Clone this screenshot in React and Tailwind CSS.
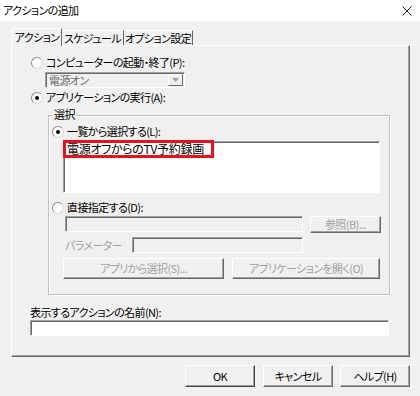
import React from "react";

const FONT = { fontFamily: '"Noto Sans CJK JP", "Noto Sans", sans-serif', fontFeatureSettings: '"palt"' };

function Radio({ checked, label, className = "" }) {
  return (
    <div className={"flex items-center h-[13px] " + className}>
      <span className="w-[12px] h-[12px] rounded-full border border-t-[#8d8d8d] border-l-[#8d8d8d] border-r-[#d8d8d8] border-b-[#d8d8d8] bg-white flex items-center justify-center shrink-0">
        {checked && <span className="w-[4px] h-[4px] rounded-full bg-black" />}
      </span>
      <span className="ml-[3px] leading-none whitespace-nowrap">{label}</span>
    </div>
  );
}

function Btn({ children, w, h, disabled, def, className = "" }) {
  return (
    <div
      className={
        "flex items-center justify-center leading-none whitespace-nowrap border border-t-white border-l-white " +
        (def ? "border-r-[#404040] border-b-[#404040] " : "border-r-[#696969] border-b-[#696969] ") +
        "shadow-[inset_-1px_-1px_0_#a0a0a0] bg-[#f0f0f0] " +
        (disabled ? "text-[#a0a0a0] " : "text-black ") +
        className
      }
      style={{ width: w, height: h }}
    >
      {children}
    </div>
  );
}

function Sunken({ w, h, white, className = "", children }) {
  return (
    <div
      className={
        "border border-t-[#a0a0a0] border-l-[#a0a0a0] border-r-white border-b-white shadow-[inset_1px_1px_0_#696969] " +
        (white ? "bg-white " : "bg-[#f0f0f0] ") +
        className
      }
      style={{ width: w, height: h }}
    >
      {children}
    </div>
  );
}

export default function App() {
  return (
    <div className="w-[420px] h-[396px] bg-[#f0f0f0] text-[11px] tracking-[-0.6px] text-black overflow-hidden flex flex-col" style={FONT}>
      {/* Title bar */}
      <div className="h-[21px] bg-white flex items-center justify-between pl-[3px] pr-[8px] shrink-0">
        <span className="leading-none">アクションの追加</span>
        <svg width="10" height="10" viewBox="0 0 10 10" className="mt-[1px]">
          <path d="M0.5 0.5 L9.5 9.5 M9.5 0.5 L0.5 9.5" stroke="#222" strokeWidth="1" fill="none" />
        </svg>
      </div>

      {/* Tabs */}
      <div className="mt-[7px] ml-[12px] flex items-end h-[17px] relative z-10 whitespace-nowrap">
        <div className="h-[18px] w-[50px] mb-[-1px] bg-[#f0f0f0] border-t border-l border-r border-t-white border-l-white border-r-[#696969] flex items-center justify-center leading-none">
          アクション
        </div>
        <div className="h-[15px] w-[62px] border-t border-r border-t-white border-r-[#696969] flex items-center justify-center leading-none">
          スケジュール
        </div>
        <div className="h-[15px] w-[69px] border-t border-r border-t-white border-r-[#696969] flex items-center justify-center leading-none">
          オプション設定
        </div>
      </div>

      {/* Panel */}
      <div className="ml-[11px] w-[399px] h-[312px] shrink-0 border border-t-white border-l-white border-r-[#696969] border-b-[#696969] shadow-[inset_-1px_-1px_0_#a0a0a0] flex flex-col">
        <Radio label="コンピューターの起動・終了(P):" className="mt-[10px] ml-[19px]" />
        <Sunken w={140} h={16} className="mt-[3px] ml-[33px] flex items-center justify-between">
          <span className="ml-[3px] leading-none text-[#6d6d6d]">電源オン</span>
          <div className="w-[15px] h-[12px] mr-[1px] border border-t-white border-l-white border-r-[#696969] border-b-[#696969] flex items-center justify-center">
            <svg width="7" height="4" viewBox="0 0 7 4">
              <path d="M0 0 H7 L3.5 4 Z" fill="#a0a0a0" />
            </svg>
          </div>
        </Sunken>
        <Radio checked label="アプリケーションの実行(A):" className="mt-[3px] ml-[19px]" />

        {/* Group box */}
        <div className="relative mt-[11px] ml-[36px] w-[342px] h-[180px] border border-[#c0c0c0] shadow-[inset_1px_1px_0_white,1px_1px_0_white] flex flex-col">
          <span className="absolute -top-[7px] left-[4px] px-[1px] bg-[#f0f0f0] leading-none">選択</span>
          <Radio checked label="一覧から選択する(L):" className="mt-[9px] ml-[3px]" />
          <Sunken w={317} h={52} white className="mt-[3px] ml-[14px] relative">
            <div className="absolute -left-[1px] -top-[2px] w-[151px] h-[18px] pl-[1px] border-[3px] border-[#e8101c] flex items-center leading-none whitespace-nowrap bg-white text-[12px] tracking-[-0.3px]">
              電源オフからのTV予約録画
            </div>
          </Sunken>
          <Radio label="直接指定する(D):" className="mt-[8px] ml-[3px]" />
          <div className="flex items-start mt-[2px] ml-[16px] gap-[7px]">
            <Sunken w={238} h={16} />
            <Btn w={71} h={17} disabled>参照(B)...</Btn>
          </div>
          <div className="flex items-center mt-[4px] ml-[16px]">
            <span className="w-[67px] leading-none text-[#a0a0a0]">パラメーター</span>
            <Sunken w={171} h={16} />
          </div>
          <div className="flex mt-[5px] ml-[14px] gap-[8px]">
            <Btn w={161} h={21} disabled>アプリから選択(S)...</Btn>
            <Btn w={148} h={21} disabled>アプリケーションを開く(O)</Btn>
          </div>
        </div>

        <span className="mt-[12px] ml-[18px] h-[12px] leading-none">表示するアクションの名前(N):</span>
        <Sunken w={359} h={16} white className="mt-[1px] ml-[18px]" />
      </div>

      {/* Bottom buttons */}
      <div className="flex justify-end mt-[8px] mr-[10px]">
        <Btn w={70} h={22} def>OK</Btn>
        <Btn w={70} h={22} className="ml-[8px]">キャンセル</Btn>
        <Btn w={70} h={22} className="ml-[7px]">ヘルプ(H)</Btn>
      </div>
    </div>
  );
}
